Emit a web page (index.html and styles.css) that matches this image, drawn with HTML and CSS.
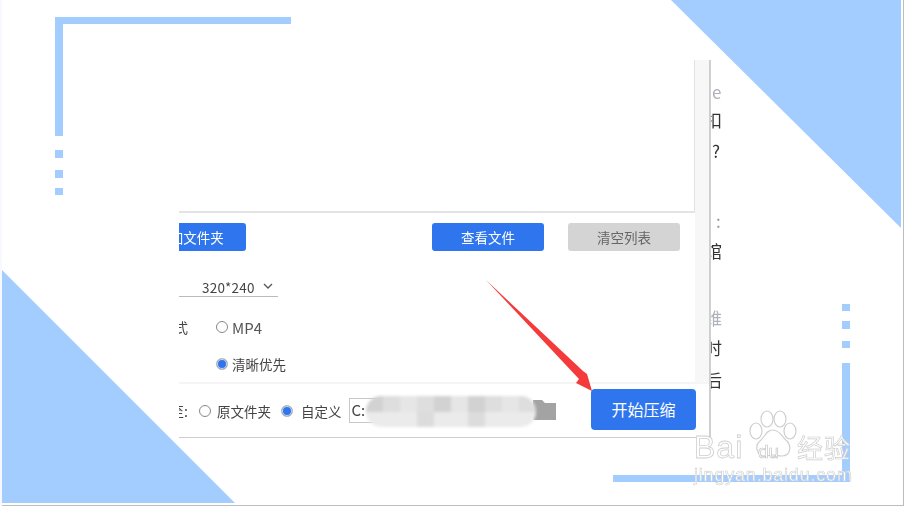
FILE: index.html
```html
<!DOCTYPE html>
<html lang="zh">
<head>
<meta charset="utf-8">
<title>视频压缩</title>
<link rel="stylesheet" href="styles.css">
</head>
<body>
<div class="stage">
  <svg class="deco" width="904" height="506" viewBox="0 0 904 506">
    <g fill="#a3ccff">
      <polygon points="671,0 901,0 901,228"/>
      <polygon points="2,270 235,503 2,503"/>
      <rect x="55" y="17" width="236" height="7"/>
      <rect x="55" y="17" width="8" height="119"/>
      <rect x="55" y="150" width="8" height="8"/>
      <rect x="55" y="170" width="8" height="8"/>
      <rect x="55" y="188" width="8" height="7"/>
      <rect x="842" y="304" width="8" height="7"/>
      <rect x="842" y="321" width="8" height="8"/>
      <rect x="842" y="341" width="8" height="7"/>
      <rect x="842" y="363" width="8" height="119"/>
      <rect x="613" y="475" width="237" height="7"/>
    </g>
  </svg>

  <div class="window">
    <div class="panel">
      <div class="upper">
        <div class="main">
          <div class="list"></div>
          <div class="toolbar">
            <button class="btn btn-blue btn-clipped">添加文件夹</button>
            <button class="btn btn-blue btn-view">查看文件</button>
            <button class="btn btn-gray btn-clear">清空列表</button>
          </div>
          <div class="size-row">
            <div class="select">
              <span>320*240</span>
              <svg class="chev" width="10" height="6" viewBox="0 0 10 6"><path d="M1 1l4 4 4-4" fill="none" stroke="#555" stroke-width="1.3"/></svg>
            </div>
          </div>
          <div class="format-row">
            <span class="cut-label">式</span>
            <span class="radio"></span>
            <span class="opt-latin">MP4</span>
          </div>
          <div class="quality-row">
            <span class="radio radio-on"></span>
            <span class="opt">清晰优先</span>
          </div>
        </div>
        <div class="scroll"></div>
      </div>
      <div class="footer">
        <span class="cut-label cut-out">至:</span>
        <span class="radio radio-src"></span>
        <span class="opt opt-src">原文件夹</span>
        <span class="radio radio-on"></span>
        <span class="opt opt-custom">自定义</span>
        <div class="path">C:</div>
        <svg class="folder" width="23" height="21" viewBox="0 0 23 21"><path d="M0 0h9l3 3h11v17H0z" fill="#a3a3a3"/></svg>
        <button class="btn btn-blue btn-start">开始压缩</button>
      </div>
      <div class="smudge">
        <i></i><i></i><i></i><i></i><i></i><i></i><i></i><i></i><i></i><i></i>
        <i></i><i></i><i></i><i></i><i></i><i></i><i></i><i></i><i></i><i></i>
      </div>
    </div>
    <div class="side">
      <div class="line line-faint line-first">e</div>
      <div class="line line-end line-second">扣</div>
      <div class="line">?</div>
      <div class="line line-colon">:</div>
      <div class="line line-end">馆</div>
      <div class="line line-end line-faint line-gap">维</div>
      <div class="line line-end">时</div>
      <div class="line line-end line-last">后</div>
    </div>
  </div>

  <svg class="arrow" width="120" height="125" viewBox="0 0 120 125">
    <polygon points="1,0 98,91 102,94 107,111 91,103 94,99" fill="#f43a3a"/>
  </svg>

  <div class="mark">
    <svg class="paw" width="50" height="50" viewBox="0 0 50 50">
      <g fill="rgba(255,255,255,.5)" stroke="#cfcfcf" stroke-width="1.200">
        <ellipse cx="8" cy="21" rx="6" ry="8"/>
        <ellipse cx="19" cy="9" rx="6" ry="8"/>
        <ellipse cx="32" cy="9" rx="6" ry="8"/>
        <ellipse cx="42" cy="21" rx="6" ry="8"/>
        <path d="M25 20c-7 0-8 7-13 11-6 5-3 15 5 15 4 0 5-1 8-1s5 1 9 1c8 0 10-9 5-15-5-4-7-11-14-11z"/>
      </g>
    </svg>
    <div class="mark-top"><span class="mark-bai">Bai</span><span class="mark-du">du</span><span class="mark-cn">经验</span></div>
    <div class="mark-url">jingyan.baidu.com</div>
  </div>
</div>
</body>
</html>
```

FILE: styles.css
```css
* { box-sizing: border-box; }
html, body { margin: 0; padding: 0; background: #fff; }
body { font-family: "Noto Sans CJK SC", "Noto Sans", sans-serif; overflow: hidden; }

.stage {
  position: relative;
  width: 904px;
  height: 506px;
  background: #fff;
  overflow: hidden;
  border-left: 2px solid #f8f8ff;
}
.stage::before {
  content: "";
  position: absolute;
  left: -2px;
  top: 0;
  width: 903px;
  height: 505px;
  border-right: 2px solid #bdbdbd;
  border-bottom: 2px solid #bdbdbd;
}
.deco { position: absolute; left: -2px; top: 0; }

.window {
  position: absolute;
  left: 177px;
  top: 60px;
  display: flex;
  filter: blur(0.35px);
}
.panel {
  position: relative;
  width: 532px;
  height: 378px;
  background: #fff;
  border-right: 2px solid #cfcfcf;
  border-bottom: 1px solid #cfcfcf;
  overflow: hidden;
}
.upper { display: flex; height: 322px; }
.main { width: 516px; }
.scroll { width: 14px; background: #f7f7f7; }

.list {
  height: 153px;
  border-right: 1px solid #e2e2e2;
  border-bottom: 2px solid #e4e4e4;
}
.toolbar { display: flex; padding-top: 10px; }
.btn {
  border: 0;
  border-radius: 3px;
  font-family: inherit;
  font-size: 13.500px;
  line-height: 28px;
  height: 28px;
  width: 112px;
  padding: 0;
}
.btn-blue { background: #2f76ee; color: #fff; }
.btn-gray { background: #d4d4d4; color: #666; }
.btn-clipped { margin-left: -45px; flex: none; }
.btn-view { margin-left: 186px; }
.btn-clear { margin-left: 24px; }

.size-row { padding-top: 25px; }
.select {
  display: flex;
  align-items: center;
  width: 99px;
  height: 21px;
  padding: 2px 0 0 23px;
  border-bottom: 1px solid #bbb;
  font-size: 13.500px;
  color: #444;
  letter-spacing: 0.2px;
}
.chev { margin-left: 8px; margin-top: -3px; }

.format-row {
  display: flex;
  align-items: center;
  height: 20px;
  margin-top: 20px;
  color: #444;
}
.cut-label {
  width: 9px;
  overflow: hidden;
  display: flex;
  justify-content: flex-end;
  font-size: 14px;
  color: #444;
  white-space: nowrap;
}
.format-row .radio { margin-left: 28px; }
.opt-latin { margin-left: 4px; font-size: 15px; color: #555; }
.quality-row {
  display: flex;
  align-items: center;
  height: 20px;
  margin: 17px 0 0 37px;
}
.opt { margin-left: 4px; font-size: 13.500px; color: #444; white-space: nowrap; }

.radio {
  flex: none;
  width: 12px;
  height: 12px;
  border: 1px solid #888;
  border-radius: 50%;
  background: #fff;
}
.radio-on {
  background: #2f76ee;
  border: 1px solid #bbb;
  box-shadow: inset 0 0 0 1px #d8d8d8;
}

.footer {
  display: flex;
  align-items: center;
  height: 55px;
  border-top: 2px solid #f5f5f5;
  position: relative;
}
.cut-out { width: 9px; }
.radio-src { margin-left: 11px; }
.opt-src { margin: 0 10px 0 6px; }
.opt-custom { margin-left: 8px; }
.path {
  width: 173px;
  height: 25px;
  margin: 0 0 1px 7px;
  padding-left: 2px;
  border: 1px solid #c8c8c8;
  font-size: 15px;
  line-height: 22px;
  color: #444;
}
.folder { flex: none; margin-left: 11px; }
.btn-start {
  position: absolute;
  left: 412px;
  top: 5px;
  width: 105px;
  height: 41px;
  line-height: 41px;
  border-radius: 4px;
  font-size: 16px;
}

.smudge {
  position: absolute;
  left: 187px;
  top: 336px;
  width: 170px;
  height: 31px;
  display: grid;
  grid-template-columns: repeat(10, 1fr);
  grid-template-rows: repeat(2, 1fr);
  border-radius: 15px;
  overflow: hidden;
  filter: blur(1.500px);
}
.smudge i { background: #dedede; }
.smudge i:nth-child(odd) { background: #d2d2d2; }
.smudge i:nth-child(3n) { background: #e6e6e6; }
.smudge i:nth-child(n+11) { background: #ebebeb; }
.smudge i:nth-child(14), .smudge i:nth-child(17) { background: #dcdcdc; }

.side { width: 11px; padding-top: 20px; overflow: hidden; }
.line {
  display: flex;
  height: 24px;
  margin-bottom: 6px;
  padding-left: 1px;
  font-size: 17px;
  line-height: 24px;
  color: #333;
  white-space: nowrap;
}
.line-end { justify-content: flex-end; padding-left: 0; }
.line-faint { color: #aeb2ba; }
.line-first { margin-bottom: 4px; }
.line-second { margin-bottom: 7px; }
.line-colon { margin-top: 46px; padding-left: 5px; color: #8a96a8; }
.line-gap { margin-top: 43px; }
.line-last { margin-top: 8px; }

.arrow { position: absolute; left: 483px; top: 280px; }

.mark { position: absolute; left: 692px; top: 408px; width: 170px; color: #fff; }
.paw { position: absolute; left: 54px; top: 2px; }
.mark-top {
  position: relative;
  display: flex;
  align-items: baseline;
  height: 52px;
  padding-top: 21px;
  line-height: 36px;
  -webkit-text-stroke: 0.8px #cfcfcf;
}
.mark-bai { font-family: "Liberation Sans", sans-serif; font-size: 32px; width: 64px; letter-spacing: 1px; white-space: nowrap; }
.mark-du { font-family: "Liberation Sans", sans-serif; font-size: 19px; width: 39px; -webkit-text-stroke: 0.6px #bdbdbd; }
.mark-cn { font-size: 26px; letter-spacing: 1px; white-space: nowrap; -webkit-text-stroke: 0.7px #cfcfcf; }
.mark-url {
  position: relative;
  margin-top: 4px;
  font-family: "Liberation Sans", sans-serif;
  font-size: 18px;
  line-height: 22px;
  letter-spacing: 0.800px;
  white-space: nowrap;
  -webkit-text-stroke: 0.6px #cfcfcf;
}
```
